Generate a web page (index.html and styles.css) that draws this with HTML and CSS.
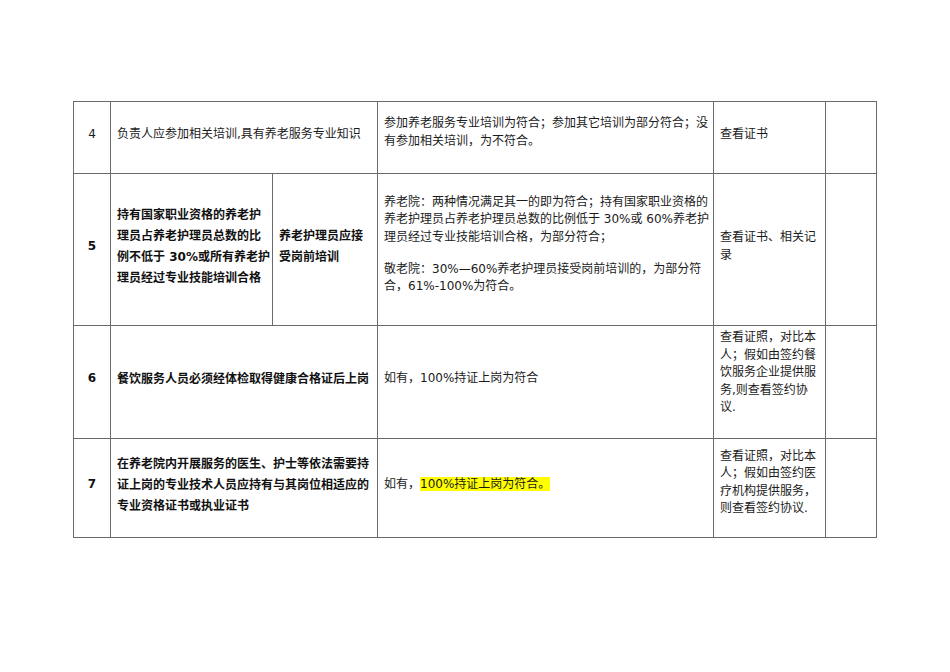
FILE: index.html
```html
<!DOCTYPE html>
<html lang="zh-CN">
<head>
<meta charset="utf-8">
<title>养老服务人员要求</title>
<link rel="stylesheet" href="styles.css">
</head>
<body>
<div class="page">
  <table class="grid">
    <colgroup>
      <col class="c-no"><col class="c-item"><col class="c-sub"><col class="c-std"><col class="c-method"><col class="c-note">
    </colgroup>
    <tr class="r4">
      <td class="no">4</td>
      <td class="item" colspan="2">负责人应参加相关培训,具有养老服务专业知识</td>
      <td class="std"><p>参加养老服务专业培训为符合；参加其它培训为部分符合；没<br>有参加相关培训，为不符合。</p></td>
      <td class="method">查看证书</td>
      <td class="note"></td>
    </tr>
    <tr class="r5">
      <td class="no strong">5</td>
      <td class="item strong">持有国家职业资格的养老护<br>理员占养老护理员总数的比<br>例不低于 30%或所有养老护<br>理员经过专业技能培训合格</td>
      <td class="item strong">养老护理员应接<br>受岗前培训</td>
      <td class="std"><p>养老院：两种情况满足其一的即为符合；持有国家职业资格的<br>养老护理员占养老护理员总数的比例低于 30%或 60%养老护<br>理员经过专业技能培训合格，为部分符合；</p><p>敬老院：30%—60%养老护理员接受岗前培训的，为部分符<br>合，61%-100%为符合。</p></td>
      <td class="method">查看证书、相关记录</td>
      <td class="note"></td>
    </tr>
    <tr class="r6">
      <td class="no strong">6</td>
      <td class="item strong" colspan="2">餐饮服务人员必须经体检取得健康合格证后上岗</td>
      <td class="std">如有，100%持证上岗为符合</td>
      <td class="method">查看证照，对比本人；假如由签约餐饮服务企业提供服务,则查看签约协议.</td>
      <td class="note"></td>
    </tr>
    <tr class="r7">
      <td class="no strong">7</td>
      <td class="item strong" colspan="2">在养老院内开展服务的医生、护士等依法需要持<br>证上岗的专业技术人员应持有与其岗位相适应的<br>专业资格证书或执业证书</td>
      <td class="std">如有，<span class="mark">100%持证上岗为符合。</span></td>
      <td class="method">查看证照，对比本人；假如由签约医疗机构提供服务，则查看签约协议.</td>
      <td class="note"></td>
    </tr>
  </table>
</div>
</body>
</html>
```
FILE: styles.css
```css
html, body {
  margin: 0;
  padding: 0;
  background: #ffffff;
}

body {
  font-family: "DejaVu Sans", "Noto Sans CJK SC", sans-serif;
  font-size: 12px;
  color: #1a1a1a;
}

.page {
  padding: 101px 0 0 73px;
}

.grid {
  border-collapse: collapse;
  table-layout: fixed;
  width: 804px;
}

.c-no { width: 37px; }
.c-item { width: 162px; }
.c-sub { width: 105px; }
.c-std { width: 336px; }
.c-method { width: 112px; }
.c-note { width: 51px; }

.grid td {
  border: 1px solid #6a6a6a;
  padding: 0 6px 6px 6px;
  vertical-align: middle;
  line-height: 17.5px;
}

.r4 { height: 72px; }
.r5 { height: 152px; }
.r6 { height: 113px; }
.r7 { height: 99px; }

.grid td.no {
  text-align: center;
  padding-left: 0;
  padding-right: 0;
}

.strong {
  font-weight: bold;
  color: #111;
}

.grid td.item.strong {
  line-height: 21px;
  white-space: nowrap;
}

.grid td.std {
  white-space: nowrap;
}

.std p {
  margin: 0;
}

.std p + p {
  margin-top: 14.5px;
}

.r4 .std, .r5 .std {
  padding-bottom: 10px;
}

.r6 .method {
  padding-bottom: 18px;
}

.r7 .method {
  padding-bottom: 11px;
}

.mark {
  background: #ffff00;
}
```
